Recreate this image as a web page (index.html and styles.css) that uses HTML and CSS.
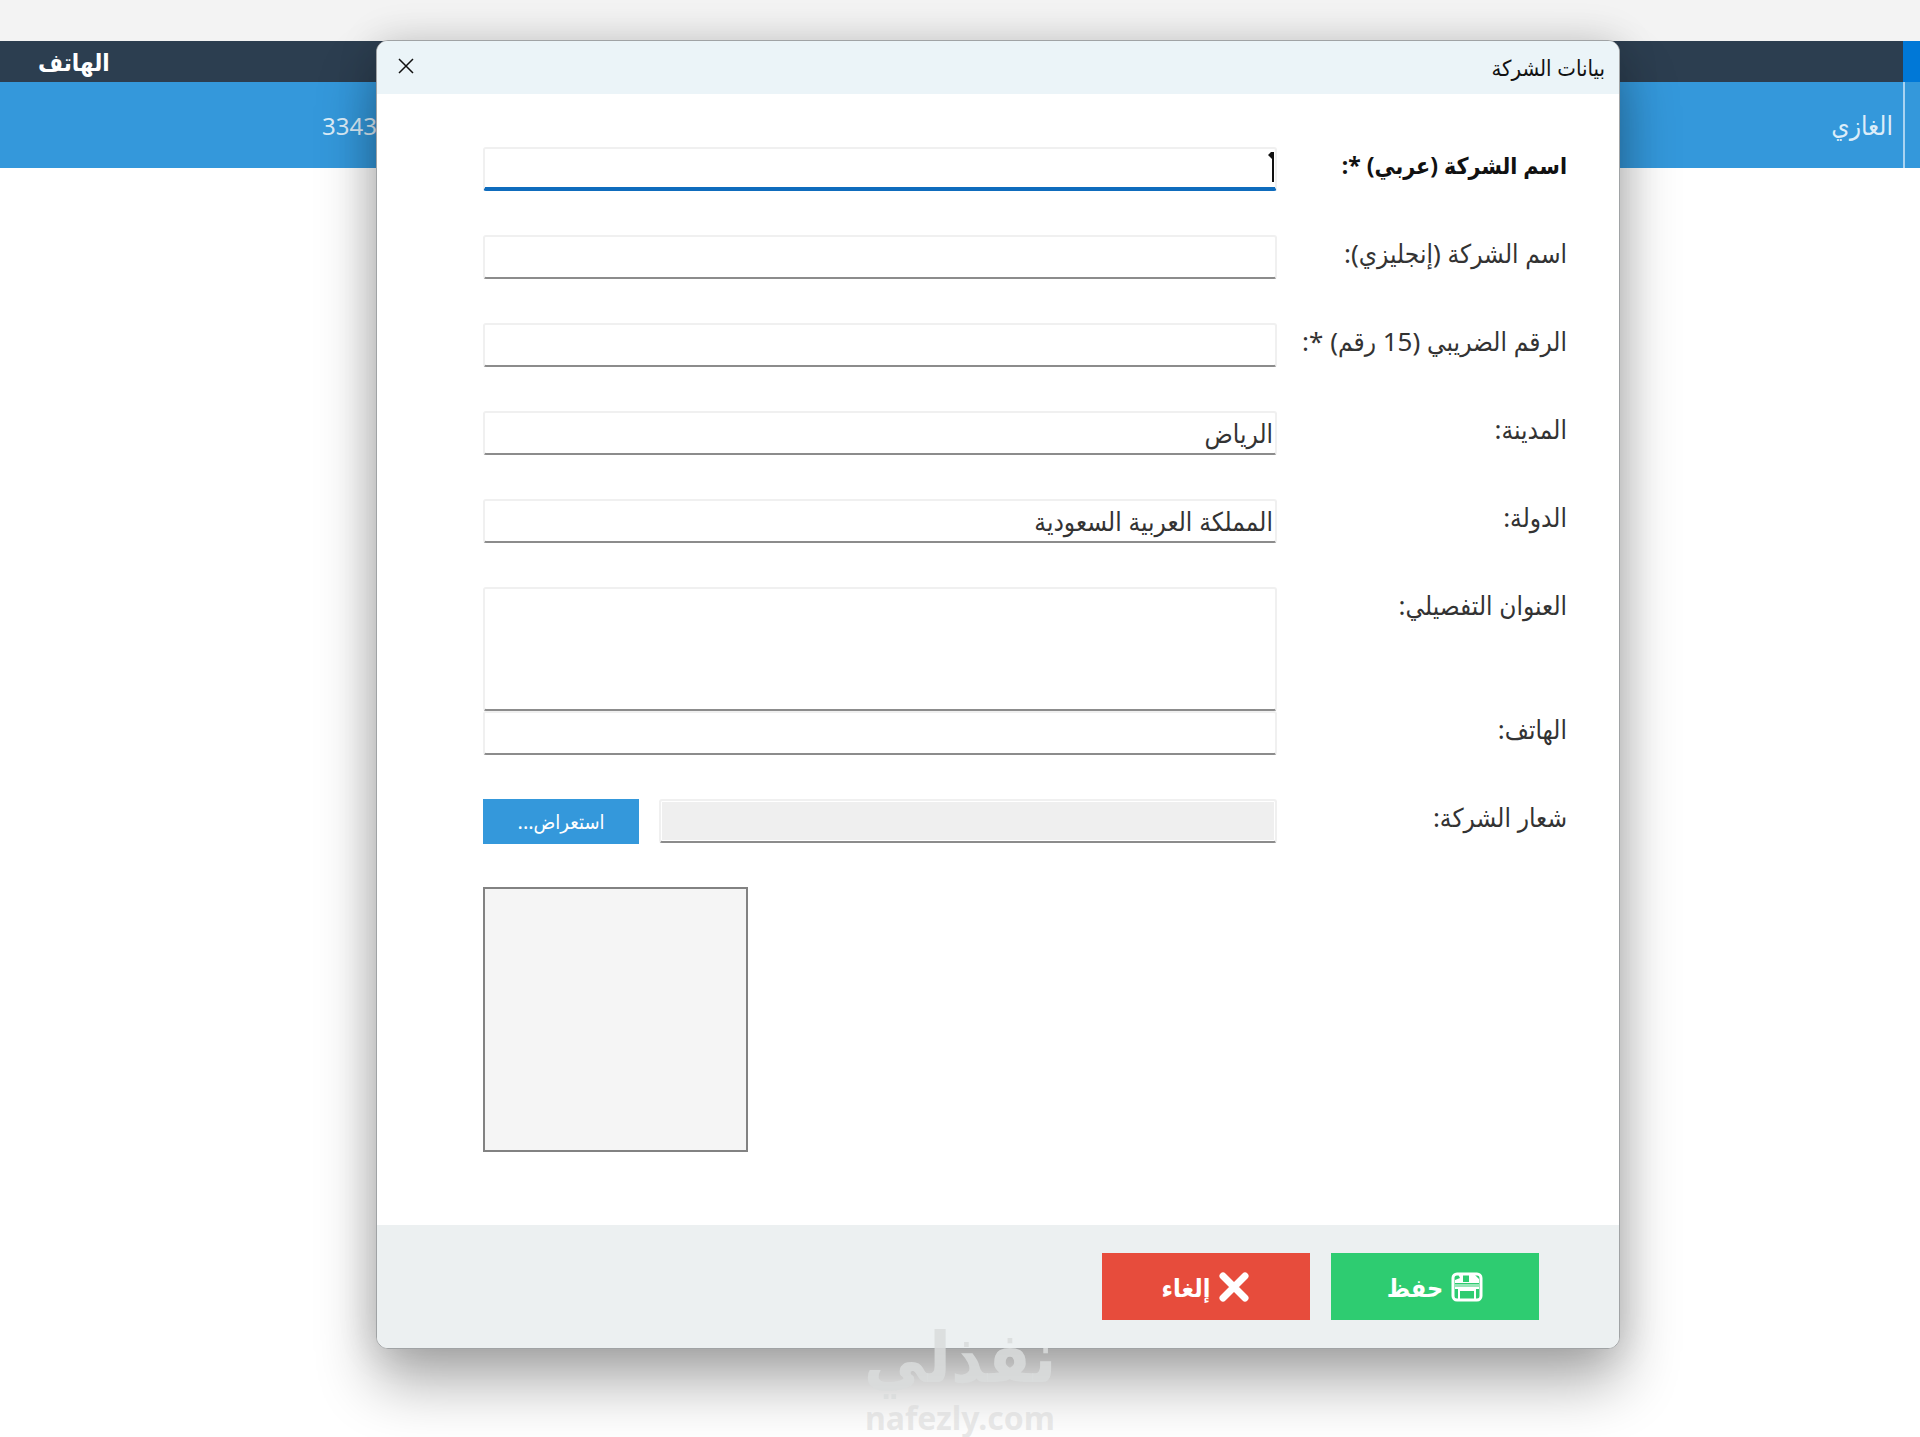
FILE: index.html
```html
<!DOCTYPE html>
<html lang="ar" dir="rtl">
<head>
  <meta charset="UTF-8" />
  <meta name="viewport" content="width=device-width, initial-scale=1.0"/>
  <title>بيانات الشركة</title>
  <link rel="stylesheet" href="styles.css">
</head>
<body>
  <!-- قائمة الشركات في الخلفية -->
  <table class="companies">
    <thead>
      <tr>
        <th class="marker"></th>
        <th></th>
        <th class="phone-head">الهاتف</th>
      </tr>
    </thead>
    <tbody>
      <tr>
        <td class="marker"></td>
        <td>الغازي</td>
        <td class="phone">3343</td>
      </tr>
    </tbody>
  </table>

  <div class="overlay">
    <form class="dialog" id="companyForm" role="dialog" aria-labelledby="dialogTitle">
      <header class="titlebar">
        <h1 id="dialogTitle">بيانات الشركة</h1>
        <button type="button" class="close" aria-label="إغلاق">
          <svg width="16" height="16" viewBox="0 0 16 16"><path d="M1 1 L15 15 M15 1 L1 15" fill="none" stroke="#111" stroke-width="1.5"/></svg>
        </button>
      </header>

      <div class="fields">
        <div class="row">
          <label for="nameAr" class="required">اسم الشركة (عربي) *:</label>
          <div class="control focused">
            <input type="text" id="nameAr">
            <svg class="caret" width="8" height="30" viewBox="0 0 8 30"><path d="M6 0 V30 H4 V7 L0 3 L3 0 Z" fill="#111"/></svg>
          </div>
        </div>
        <div class="row">
          <label for="nameEn">اسم الشركة (إنجليزي):</label>
          <div class="control"><input type="text" id="nameEn"></div>
        </div>
        <div class="row">
          <label for="taxNo">الرقم الضريبي (15 رقم) *:</label>
          <div class="control"><input type="text" id="taxNo"></div>
        </div>
        <div class="row">
          <label for="city">المدينة:</label>
          <div class="control"><input type="text" id="city" value="الرياض"></div>
        </div>
        <div class="row">
          <label for="country">الدولة:</label>
          <div class="control"><input type="text" id="country" value="المملكة العربية السعودية"></div>
        </div>
        <div class="row row-address">
          <label for="address">العنوان التفصيلي:</label>
          <div class="control"><textarea id="address"></textarea></div>
        </div>
        <div class="row">
          <label for="phone">الهاتف:</label>
          <div class="control"><input type="text" id="phone"></div>
        </div>
        <div class="row">
          <label for="logo">شعار الشركة:</label>
          <div class="control">
            <input type="text" id="logo" readonly>
            <button type="button" class="browse">استعراض...</button>
          </div>
        </div>
        <div class="preview"></div>
      </div>

      <footer class="actions">
        <button type="submit" class="btn save">
          <svg width="32" height="30" viewBox="0 0 32 30">
            <rect x="2" y="2" width="28" height="26" rx="4" fill="none" stroke="#fff" stroke-width="3"/>
            <path d="M7 2 H12 V10 H18 V2 H23 L28 7 V11 H4 V8 L9 6 Z" fill="#fff"/>
            <path d="M4 12 H28 V15 H4 Z" fill="#fff" opacity=".5"/>
            <path d="M4 16 H28" stroke="#fff" stroke-width="2"/>
            <rect x="8" y="18" width="16" height="10" fill="none" stroke="#fff" stroke-width="2"/>
          </svg>
          حفظ
        </button>
        <button type="button" class="btn cancel">
          <svg width="32" height="30" viewBox="0 0 32 30"><path d="M5 4 L27 26 M27 4 L5 26" fill="none" stroke="#fff" stroke-width="7" stroke-linecap="round"/></svg>
          إلغاء
        </button>
      </footer>
    </form>
  </div>

  <div class="watermark">
    <span class="brand">نفذلي</span>
    <span class="site" dir="ltr">nafezly.com</span>
  </div>
</body>
</html>
```
FILE: styles.css
```css
* { box-sizing: border-box; }
body { margin: 0; min-height: 100vh; padding-top: 41px; background: linear-gradient(#f3f3f3 41px, #fff 41px); font-family: "Noto Sans", "DejaVu Sans Condensed", sans-serif; font-size: 26px; color: #333; overflow: hidden; }
button, input, textarea { font-family: inherit; }
button { border: none; padding: 0; cursor: pointer; }

.companies { width: 100%; border-spacing: 0; table-layout: fixed; color: #fff; }
.companies th { height: 41px; padding: 0 38px; background: #2c3e50; font-size: 24px; line-height: 32px; }
.companies td { height: 86px; padding: 0 10px; background: #3498db; color: #dcedf9; }
.companies .marker { width: 17px; padding: 0; }
.companies th.marker { background: #0078d7; }
.companies td.marker { border-left: 2px solid #a9d3f1; }
.companies .phone-head { text-align: left; }
.companies .phone { text-align: left; padding-left: 322px; font-size: 24px; }

.overlay { position: absolute; top: 40px; right: 300px; left: 376px; }
.dialog { border: 1px solid #a0a3a5; border-radius: 12px; background: #fff; overflow: hidden; box-shadow: 0 34px 60px rgba(0, 0, 0, .32), 0 0 40px rgba(0, 0, 0, .14); }
.titlebar { display: flex; justify-content: space-between; align-items: center; height: 53px; padding: 0 14px 2px 21px; background: #ebf4f8; }
.titlebar h1 { margin: 0; font-size: 22px; font-weight: normal; color: #111; }
.close { display: flex; padding-bottom: 2px; background: none; }

.fields { padding: 53px 52px 73px 106px; }
.row { display: grid; grid-template-columns: 290px 1fr; height: 88px; }
.row label { line-height: 36px; white-space: nowrap; }
.row .required { font-size: 23px; font-weight: bold; color: #111; }
.row-address { height: 124px; }
.control { display: flex; gap: 20px; align-items: flex-start; position: relative; }
.control input, .control textarea { flex: 1; min-width: 0; height: 44px; padding: 0 2px; border: 2px solid #f0f0f0; border-bottom-color: #8c8c8c; border-radius: 3px; background: #fff; font-size: 26px; color: #333; outline: none; }
.control textarea { height: 124px; resize: none; }
.control input[readonly] { background: #efefef; box-shadow: inset 0 0 0 1px #fff; }
.control.focused input { border-bottom: 4px solid #0f6cbd; }
.caret { position: absolute; top: 5px; right: 1px; }
.browse { width: 156px; height: 45px; background: #3498db; color: #fff; font-size: 20px; }
.preview { width: 265px; height: 265px; margin: 0 auto 0 0; border: 2px solid #828282; background: #f5f5f5; }

.actions { display: flex; gap: 21px; height: 123px; padding: 28px 80px; background: #ecf0f1; }
.btn { display: flex; justify-content: center; align-items: center; gap: 8px; width: 208px; height: 67px; color: #fff; font-size: 25px; font-weight: bold; }
.save { background: #2ecc71; }
.cancel { background: #e74c3c; }

.watermark { position: absolute; top: 1312px; left: 854px; width: 212px; display: flex; flex-direction: column; align-items: center; font-weight: bold; }
.brand { font-size: 70px; line-height: 86px; color: rgba(217, 220, 220, .85); }
.site { font-size: 32px; line-height: 40px; color: rgba(217, 217, 217, .6); }
```
